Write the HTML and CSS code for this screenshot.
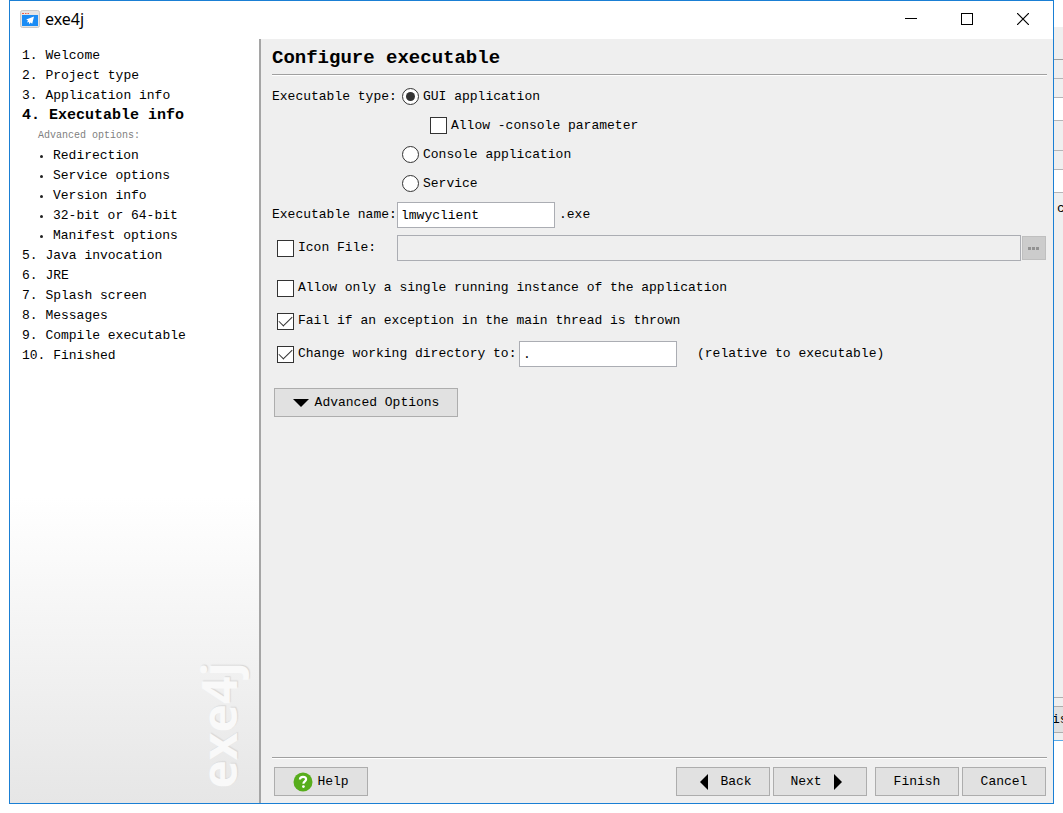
FILE: index.html
```html
<!DOCTYPE html>
<html lang="en">
<head>
<meta charset="utf-8">
<title>exe4j</title>
<link rel="stylesheet" href="styles.css">
</head>
<body>
<div class="desktop">
  <div class="window">
    <header class="titlebar">
      <svg class="app-icon" width="20" height="18" viewBox="0 0 20 18" aria-hidden="true">
        <rect x=".5" y=".5" width="19" height="17" rx="2" fill="#e4e4e4" stroke="#c9c9c9"/>
        <path d="M2 3.500h2M5 3.500h1.500M7.500 3.500h1.500" stroke="#f0604a" stroke-width="1"/>
        <rect x="2" y="5" width="16" height="11" fill="#1a8cf5"/>
        <path d="M14 6.500L6.200 9.600l1.800 1L7 12.500l1.900-.6.300 2.300 1.400-1.600 1.600 1.200z" fill="#fff"/>
      </svg>
      <span class="app-title">exe4j</span>
      <div class="controls">
        <button class="control" aria-label="Minimize"><svg width="12" height="12" viewBox="0 0 12 12"><path d="M0 5.500h12" stroke="#000"/></svg></button>
        <button class="control" aria-label="Maximize"><svg width="12" height="12" viewBox="0 0 12 12"><rect x=".5" y=".5" width="11" height="11" fill="none" stroke="#000"/></svg></button>
        <button class="control" aria-label="Close"><svg width="12" height="12" viewBox="0 0 12 12"><path d="M0 0l12 12M12 0L0 12" stroke="#000" stroke-width="1.200"/></svg></button>
      </div>
    </header>
    <div class="content">
      <nav class="sidebar">
        <ul class="steps">
          <li>1. Welcome</li>
          <li>2. Project type</li>
          <li>3. Application info</li>
          <li class="current">4. Executable info</li>
          <li class="sub-title">Advanced options:</li>
          <li class="sub">Redirection</li>
          <li class="sub">Service options</li>
          <li class="sub">Version info</li>
          <li class="sub">32-bit or 64-bit</li>
          <li class="sub">Manifest options</li>
          <li>5. Java invocation</li>
          <li>6. JRE</li>
          <li>7. Splash screen</li>
          <li>8. Messages</li>
          <li>9. Compile executable</li>
          <li>10. Finished</li>
        </ul>
        <div class="brand">exe4j</div>
      </nav>
      <main class="panel">
        <h1 class="heading">Configure executable</h1>
        <div class="types" role="radiogroup" aria-labelledby="type-label">
          <span class="field-label" id="type-label">Executable type:</span>
          <div class="options">
            <label class="option"><input class="radio" type="radio" name="type" checked>GUI application</label>
            <label class="option nested"><input class="check" type="checkbox">Allow -console parameter</label>
            <label class="option"><input class="radio" type="radio" name="type">Console application</label>
            <label class="option"><input class="radio" type="radio" name="type">Service</label>
          </div>
        </div>
        <div class="row">
          <label class="field-label" for="exe-name">Executable name:</label>
          <input class="text short" id="exe-name" type="text" value="lmwyclient">
          <span class="suffix">.exe</span>
        </div>
        <div class="row">
          <label class="field-label toggle"><input class="check" type="checkbox">Icon File:</label>
          <input class="text wide" type="text" aria-label="Icon file path" disabled>
          <button class="browse" aria-label="Browse" disabled><svg width="12" height="3" viewBox="0 0 12 3"><path d="M0 0h3v3H0zM4 0h3v3H4zM8 0h3v3H8z" fill="#929292"/></svg></button>
        </div>
        <div class="row spaced">
          <label class="toggle"><input class="check" type="checkbox">Allow only a single running instance of the application</label>
        </div>
        <div class="row">
          <label class="toggle"><input class="check" type="checkbox" checked>Fail if an exception in the main thread is thrown</label>
        </div>
        <div class="row">
          <label class="toggle directory"><input class="check" type="checkbox" checked>Change working directory to:</label>
          <input class="text short" type="text" aria-label="Working directory" value=".">
          <span class="note">(relative to executable)</span>
        </div>
        <button class="button advanced"><svg width="16" height="8" viewBox="0 0 16 8"><path d="M0 0h16L8 8z"/></svg>Advanced Options</button>
        <footer class="footer">
          <button class="button help"><svg width="20" height="20" viewBox="0 0 20 20"><circle cx="10" cy="10" r="9.500" fill="#57ad1c"/><path d="M6.900 7.500C7 5.700 8.300 4.800 10 4.800s3.100 1 3.100 2.500c0 2-2.700 2.100-2.700 4.400" fill="none" stroke="#fff" stroke-width="2.200"/><circle cx="10.400" cy="14.600" r="1.400" fill="#fff"/></svg>Help</button>
          <button class="button step back"><svg width="8" height="16" viewBox="0 0 8 16"><path d="M8 0v16L0 8z"/></svg>Back</button>
          <button class="button step next">Next<svg width="8" height="16" viewBox="0 0 8 16"><path d="M0 0v16l8-8z"/></svg></button>
          <button class="button finish">Finish</button>
          <button class="button cancel">Cancel</button>
        </footer>
      </main>
    </div>
  </div>
  <div class="behind" aria-hidden="true">
    <div class="behind-title"></div>
    <div class="behind-head"></div>
    <div class="behind-gap"></div>
    <div class="behind-gap"></div>
    <div class="behind-field"></div>
    <div class="behind-group"></div>
    <div class="behind-gap"></div>
    <div class="behind-field"></div>
    <div class="behind-body">c</div>
    <div class="behind-footer"><div class="behind-button">is</div></div>
  </div>
</div>
</body>
</html>
```
FILE: styles.css
```css
* { box-sizing: border-box; }
body {
  margin: 0;
  background: #fff;
  color: #000;
  font: 13px/20px "Liberation Mono", monospace;
}
button, input { font: inherit; color: inherit; margin: 0; }
svg { display: block; flex: none; }

.desktop { display: flex; min-height: 100vh; padding: 0 0 9px 9px; }
.window {
  flex: 1;
  min-width: 0;
  display: flex;
  flex-direction: column;
  border: 1px solid #1a7fd4;
  background: #efefef;
}

.titlebar { display: flex; align-items: center; height: 38px; padding: 0 2px 2px 10px; background: #fff; }
.app-title { margin-left: 5px; font: 16px/22px "Noto Sans", sans-serif; }
.controls { display: flex; margin-left: auto; height: 100%; }
.control {
  display: flex;
  align-items: center;
  justify-content: center;
  width: 56px;
  padding: 0;
  border: 0;
  background: none;
}

.content { flex: 1; display: flex; }
.sidebar {
  display: flex;
  flex-direction: column;
  justify-content: space-between;
  width: 251px;
  flex: none;
  border-right: 2px solid #a5a5a5;
  background: linear-gradient(#fff 60%, #e6e6e6);
}
.steps { list-style: none; margin: 0; padding: 7px 0 0 12px; white-space: nowrap; }
.current { font-size: 15px; font-weight: bold; }
.sub-title { padding-left: 16px; font-size: 10px; color: #808080; }
.sub { display: flex; align-items: center; gap: 10px; padding-left: 18px; }
.sub::before { content: ""; width: 3px; height: 3px; border-radius: 50%; background: #222; }
.brand {
  align-self: flex-end;
  margin: 0 12px 14px 0;
  writing-mode: vertical-rl;
  transform: rotate(180deg);
  font: bold 48px/56px "Open Sans", sans-serif;
  color: #f9f9f9;
  text-shadow: 1px 1px 1px #d8d8d8;
}

.panel { flex: 1; min-width: 0; display: flex; flex-direction: column; padding: 0 6px 7px 11px; }
.heading {
  margin: 0 0 7px;
  padding: 7px 0 4px;
  border-bottom: 1px solid #a0a0a0;
  box-shadow: 0 1px #fff;
  font-size: 19px;
  line-height: 24px;
}
.types { display: flex; margin-bottom: 1px; }
.field-label { flex: none; width: 125px; white-space: nowrap; }
.types .field-label { line-height: 30px; }
.options { display: flex; flex-direction: column; padding-left: 5px; }
.option { display: flex; align-items: center; gap: 4px; height: 29px; }
.nested { padding-left: 28px; }
.row { display: flex; align-items: center; min-height: 26px; margin-top: 3px; }
.row + .row { margin-top: 7px; }
.row + .spaced { margin-top: 14px; }
.toggle { display: flex; align-items: center; gap: 4px; padding-left: 5px; }
.directory { width: 247px; white-space: nowrap; }

.radio, .check {
  appearance: none;
  flex: none;
  display: grid;
  place-items: center;
  width: 17px;
  height: 17px;
  border: 1px solid #333;
  background: #fff;
}
.radio { border-radius: 50%; }
.radio:checked::before { content: ""; width: 9px; height: 9px; border-radius: 50%; background: #333; }
.check:checked::before {
  content: "";
  width: 12px;
  height: 6px;
  margin-bottom: 4px;
  border: solid #333;
  border-width: 0 0 1px 1px;
  transform: rotate(-45deg);
}
.text { height: 26px; padding: 0 3px; border: 1px solid #abadb3; border-radius: 0; background: #fff; }
.short { width: 158px; }
.wide { flex: 1; min-width: 0; }
.text:disabled { background: #efefef; }
.suffix { margin-left: 4px; }
.note { margin-left: 20px; }
.browse {
  display: flex;
  align-items: center;
  justify-content: center;
  width: 24px;
  height: 24px;
  margin: 0 1px;
  padding: 0;
  border: 1px solid #bfbfbf;
  background: #ccc;
}

.button {
  display: flex;
  align-items: center;
  justify-content: center;
  height: 29px;
  padding: 0;
  border: 1px solid #adadad;
  background: #e1e1e1;
}
.advanced { width: 184px; margin: 21px 0 0 2px; gap: 6px; }
.footer {
  display: flex;
  margin-top: auto;
  padding: 9px 1px 0 2px;
  border-top: 1px solid #a0a0a0;
  box-shadow: inset 0 1px #fff;
}
.help { width: 94px; margin-right: auto; gap: 4px; }
.step { width: 94px; margin-right: 3px; gap: 12px; }
.back { padding-left: 6px; }
.next { padding-right: 8px; }
.footer .next { margin-right: 8px; }
.finish, .cancel { width: 84px; }
.finish { margin-right: 3px; }

.behind {
  display: flex;
  flex-direction: column;
  width: 9px;
  height: 741px;
  overflow: hidden;
  border-bottom: 1px solid #5aa9e6;
  background: #efefef;
}
.behind-title { height: 27px; background: #fff; }
.behind-head { height: 33px; border-bottom: 1px solid #a0a0a0; }
.behind-gap { height: 19px; border-bottom: 1px solid #b5b5b8; }
.behind-field { height: 23px; border-bottom: 1px solid #b5b5b8; background: #fff; }
.behind-group { height: 30px; border-bottom: 1px solid #b5b5b8; }
.behind-body { flex: 1; padding: 6px 0 0 3px; }
.behind-footer { height: 43px; padding-top: 8px; border-top: 1px solid #b0b0b0; }
.behind-button { height: 27px; line-height: 25px; text-indent: -2px; border: solid #adadad; border-width: 1px 0; background: #e1e1e1; }
```
